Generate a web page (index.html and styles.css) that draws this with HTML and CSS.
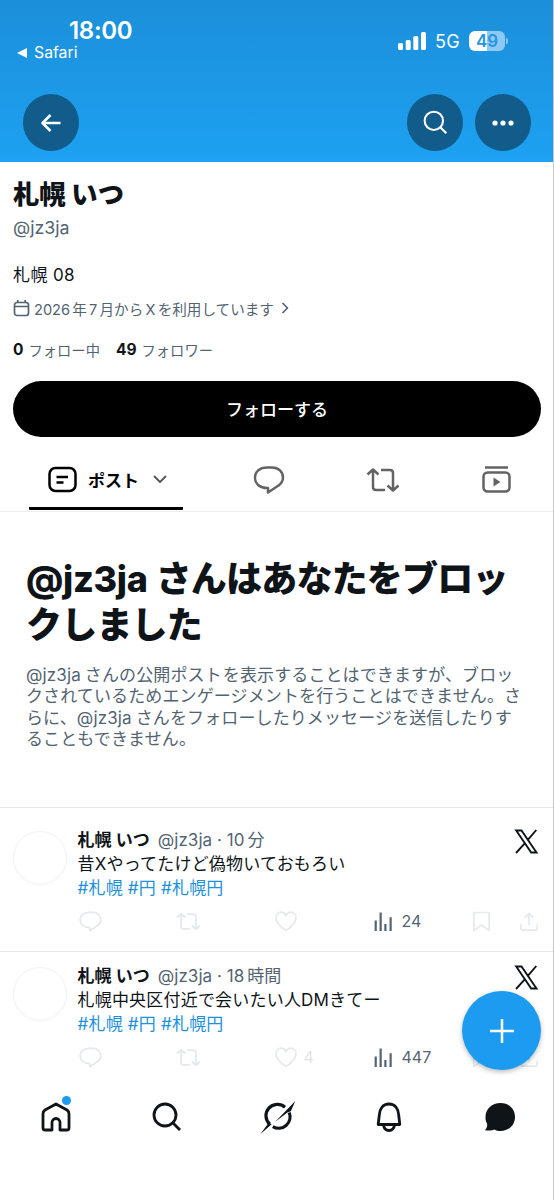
FILE: index.html
```
<!DOCTYPE html>
<html lang="ja">
<head>
<meta charset="utf-8">
<title>札幌 いつ (@jz3ja)</title>
<link rel="stylesheet" href="styles.css">
</head>
<body>
<svg class="defs" width="0" height="0" aria-hidden="true">
  <symbol id="reply" viewBox="0 0 34 34"><path d="M15 4.500h5c6.500 0 11 4.300 11 10 0 4.300-2.500 7-6 9L16 29.500V25h-1C8 25 3 21 3 14.700S8 4.500 15 4.500z"/></symbol>
  <symbol id="repost" viewBox="0 0 34 34"><path d="M1.500 11.500 7 6.500l5.500 5M7 7.500V24c0 2 1 3 3 3h9M32.500 22.500 27 27.500l-5.500-5M27 26.500V10c0-2-1-3-3-3h-9"/></symbol>
  <symbol id="heart" viewBox="0 0 24 24"><path d="M12 21.500C5 17 2 13 2 8.800 2 5.500 4.200 3.200 7 3.200c2.300 0 4 1.300 5 3.300 1-2 2.700-3.300 5-3.300 2.800 0 5 2.300 5 5.600 0 4.200-3 8.200-10 12.700z"/></symbol>
  <symbol id="views" viewBox="0 0 20 20"><path d="M1.800 9v11M7 .500V20M12 12.500V20M17.500 5.500V20"/></symbol>
  <symbol id="bookmark" viewBox="0 0 20 22"><path d="M2 1.500h16v19l-8-6-8 6z"/></symbol>
  <symbol id="share" viewBox="0 0 20 22"><path d="M10 15V3M5.500 7 10 2.500 14.500 7M1.500 14v4c0 1.500.500 2 2 2h13c1.500 0 2-.500 2-2v-4"/></symbol>
  <symbol id="search" viewBox="0 0 30 30"><circle cx="13" cy="13" r="11"/><path d="m21 21 7 7"/></symbol>
  <symbol id="xlogo" viewBox="0 0 25 25"><path d="M2.200 1.500h5.300l15 22h-5.300zM22.300 1 13.600 11.200M11.200 13.800 2 24"/></symbol>
</svg>
<div class="screen">
  <header class="cover">
    <div class="status">
      <div class="clock"><b>18:00</b><span><svg width="11" height="10"><path d="M10 0v10L0 5z"/></svg><i>Safari</i></span></div>
      <div class="signal">
        <svg width="28" height="18"><rect y="11" width="5" height="7" rx="1.500"/><rect x="7.700" y="8" width="5" height="10" rx="1.500"/><rect x="15.300" y="4" width="5" height="14" rx="1.500"/><rect x="23" width="5" height="18" rx="1.500"/></svg>
        <span class="net">5G</span>
        <span class="battery">49</span><span class="tip"></span>
      </div>
    </div>
    <div class="actions">
      <button class="round"><svg width="20" height="18" class="line"><path d="M19.500 9H1.500M9.500 1 1.500 9l8 8"/></svg></button>
      <span class="grow"></span>
      <button class="round"><svg width="25" height="25" class="line"><use href="#search"/></svg></button>
      <button class="round"><svg width="22" height="6" class="dots"><circle cx="3" cy="3" r="2.600"/><circle cx="11" cy="3" r="2.600"/><circle cx="19" cy="3" r="2.600"/></svg></button>
    </div>
  </header>
  <section class="profile">
    <h1>札幌 いつ</h1>
    <p class="handle">@jz3ja</p>
    <p class="bio">札幌 08</p>
    <p class="joined"><svg width="17" height="17" class="line"><rect x="1.500" y="2.500" width="14" height="13" rx="2.500"/><path d="M1.500 6.500h14M4.800 0v3M12.200 0v3"/></svg><span>2026<em></em>年<em></em>7<em></em>月から<em></em>X<em></em>を利用しています</span><svg width="8" height="12" class="line chev"><path d="m1.500 1 5 5-5 5"/></svg></p>
    <p class="counts"><b>0</b><span class="l1">フォロー中</span><b>49</b><span class="l2">フォロワー</span></p>
    <button class="follow">フォローする</button>
  </section>
  <nav class="tabs">
    <div class="tab active"><svg width="29" height="27" class="line"><rect x="1.500" y="2" width="26" height="23" rx="6"/><path d="M8.500 11h11.500M8.500 16.500h7"/></svg><span>ポスト</span><svg width="14" height="9" class="line down"><path d="m1 1 6 6 6-6"/></svg></div>
    <div class="tab"><svg width="34" height="34" class="line"><use href="#reply"/></svg></div>
    <div class="tab"><svg width="34" height="34" class="line"><use href="#repost"/></svg></div>
    <div class="tab"><svg width="29" height="27" class="line"><rect x="1.500" y="6.500" width="26" height="19" rx="4"/><path d="M3 1.500h23"/><path class="solid" d="m11.500 11.500 7 4.500-7 4.500z"/></svg></div>
  </nav>
  <section class="blocked">
    <h2><span class="latin">@jz3ja</span>さんはあなたをブロッ<br>クしました</h2>
    <p><span>@jz3ja</span><em class="wide"></em>さんの公開ポスト<em class="thin"></em>を表示することはできますが、ブロッ<br>クされているためエンゲージメントを行うことはできません。さ<br>らに、<span>@jz3ja</span><em class="wide"></em>さんをフォローしたりメッセージを送信したりす<br>ることもできません。</p>
  </section>
  <article class="post first">
    <div class="avatar"></div>
    <div class="body">
      <div class="meta"><b>札幌 いつ</b><span>@jz3ja · 10<em></em>分</span></div>
      <p>昔Xやってたけど偽物いておもろい</p>
      <p class="tags">#札幌 #円 #札幌円</p>
      <div class="tools"><svg class="c"><use href="#reply"/></svg><svg class="r"><use href="#repost"/></svg><svg class="h"><use href="#heart"/></svg><span class="likes"></span><svg class="v"><use href="#views"/></svg><span class="num">24</span><svg class="b"><use href="#bookmark"/></svg><svg class="s"><use href="#share"/></svg></div>
    </div>
    <svg class="x"><use href="#xlogo"/></svg>
  </article>
  <article class="post second">
    <div class="avatar"></div>
    <div class="body">
      <div class="meta"><b>札幌 いつ</b><span>@jz3ja · 18<em></em>時間</span></div>
      <p>札幌中央区付近で会いたい人DMきてー</p>
      <p class="tags">#札幌 #円 #札幌円</p>
      <div class="tools"><svg class="c"><use href="#reply"/></svg><svg class="r"><use href="#repost"/></svg><svg class="h"><use href="#heart"/></svg><span class="likes">4</span><svg class="v"><use href="#views"/></svg><span class="num">447</span><svg class="b"><use href="#bookmark"/></svg><svg class="s"><use href="#share"/></svg></div>
    </div>
    <svg class="x"><use href="#xlogo"/></svg>
  </article>
  <nav class="bottom">
    <a class="home"><svg width="30" height="30" class="line"><path d="M15 2 4 8c-1.500 1-2 2-2 4v14c0 1.500.500 2 2 2h7v-7.500a4 4 0 0 1 8 0V28h7c1.500 0 2-.500 2-2V12c0-2-.500-3-2-4z"/></svg><i class="badge"></i></a>
    <a><svg width="30" height="30" class="line"><use href="#search"/></svg></a>
    <a><svg width="36" height="34" viewBox="0 0 36 34"><path class="ring" d="M9.800 23.300A11.400 11.400 0 0 1 25 6.200M29.200 11.500A11.400 11.400 0 0 1 12.800 25.600"/><path d="M35.300 0 15.300 20.700 27.800 11.200l3-1zM.300 33.300 11.600 23.200 8.500 22z"/></svg></a>
    <a><svg width="28" height="30" class="line"><path d="M4.300 13C4.700 6.500 8 2 14 2s9.300 4.500 9.700 11l1.100 9.500H3.200z"/><path d="M8.500 23c.500 3.500 2.500 5.500 5.500 5.500s5-2 5.500-5.500"/></svg></a>
    <a><svg width="32" height="30"><path d="M16.500 1C25 1 31 7 31 15s-6 14-14.500 14c-2.500 0-4-.500-6-1.500-2.500 1-6 1.500-9.500.700C3 26 3.500 24 3 21.500 1.700 19.500 1.500 17.500 1.500 15 1.500 7 8 1 16.500 1z"/></svg></a>
  </nav>
  <button class="fab"><svg width="24" height="24" class="line"><path d="M12 0v24M0 12h24"/></svg></button>
</div>
</body>
</html>
```
FILE: styles.css
```
* { box-sizing: border-box; }
body, h1, h2, p { margin: 0; }
body { background: #fff; color: #0f1419; font-family: Inter, "Noto Sans CJK JP", sans-serif; }
button { border: 0; padding: 0; font: inherit; color: inherit; }
i { font-style: normal; }
em { display: inline-block; width: 3px; }
em.thin { width: 1px; }
em.wide { width: 4px; }
svg { display: block; flex: none; fill: #0f1419; }
.defs { position: absolute; }
.line, .tools svg { fill: none; stroke: currentColor; stroke-width: 2.500; stroke-linejoin: round; }
.screen { position: relative; width: 554px; height: 1200px; overflow: hidden; border-right: 1px solid #c5c7c9; display: flex; flex-direction: column; }

.cover { height: 162px; margin-right: -1px; flex: none; color: #fff; background: linear-gradient(#1c8fd9, #1da1f2); padding: 17px 23px 0 17px; }
.status { height: 77px; display: flex; justify-content: space-between; }
.clock b { display: block; margin-left: 52px; font-size: 24px; line-height: 28px; font-weight: 600; letter-spacing: -.3px; }
.clock span { display: flex; align-items: center; gap: 6px; font-size: 15.800px; line-height: 15px; }
.clock svg, .signal svg, .dots { fill: #fff; }
.signal { display: flex; align-items: center; height: 22px; margin: 13px 23px 0 0; }
.signal .net { font-size: 18px; margin: 0 9px; letter-spacing: .3px; }
.battery { width: 36px; height: 20px; border-radius: 6px; background: linear-gradient(90deg, #fff 50%, #8fc9f2 50%); color: #2296e3; font-size: 17px; line-height: 20px; font-weight: 600; text-align: center; }
.tip { width: 2px; height: 6px; background: #8fc9f2; border-radius: 0 3px 3px 0; margin-left: 1px; }
.actions { display: flex; gap: 12px; padding-left: 6px; }
.grow { flex: 1; }
.round { width: 56px; height: 57px; border-radius: 50%; background: #115c8b; display: grid; place-items: center; color: #fff; }

.profile { height: 275px; padding: 16px 12px 0 13px; }
.profile h1 { font-size: 26.300px; line-height: 34px; font-weight: 800; height: 37px; }
.handle { font-size: 17.800px; line-height: 25px; color: #536471; height: 48px; }
.bio { font-size: 17px; line-height: 24px; height: 33px; letter-spacing: .4px; }
.joined { display: flex; align-items: center; height: 24px; font-size: 14.600px; color: #536471; }
.joined em { width: 2.200px; }
.joined span { margin: 0 7px 0 4px; white-space: nowrap; }
.joined .line { stroke-width: 1.700; }
.counts { display: flex; height: 48px; align-items: center; font-size: 14.300px; color: #536471; margin-top: 6px; padding-bottom: 2px; }
.counts b { color: #0f1419; font-weight: 700; margin-right: 5px; font-size: 15.500px; }
.l1 { margin-right: 16px; }
.follow { width: 528px; height: 56px; border-radius: 28px; background: #000; color: #fff; font-size: 17px; font-weight: 500; margin-top: 7px; padding-bottom: 1px; }

.tabs { height: 75px; border-bottom: 1px solid #eceeef; display: grid; grid-template-columns: 212px 114px 114px 114px; color: #636363; flex: none; }
.tab { display: flex; align-items: center; justify-content: center; height: 73px; padding-top: 13px; }
.tab:last-child { padding: 12px 2px 0 0; }
.tab.active { color: #000; border-bottom: 3px solid #000; margin: 0 29px; justify-content: flex-start; padding: 15px 0 0 19px; border-radius: 1px; }
.tab.active span { font-size: 17px; font-weight: 700; margin: 0 14px 0 11px; }
.down { stroke-width: 1.800; color: #555; }
.solid { fill: currentColor; stroke: none; }

.blocked { height: 295px; padding: 44px 0 0 26px; white-space: nowrap; flex: none; }
.blocked h2 { font-size: 36px; line-height: 46px; font-weight: 800; letter-spacing: -.800px; }
.latin { margin-right: 8px; letter-spacing: -.300px; }
.blocked p { margin-top: 17px; font-size: 17px; line-height: 21.300px; color: #536471; letter-spacing: .12px; }

.post { height: 144px; border-top: 1px solid #e4e8ea; display: flex; padding: 20px 14px 0 13px; flex: none; }
.second { padding-top: 12px; height: 121px; }
.avatar { width: 54px; height: 54px; border-radius: 50%; border: 1px solid #f0f1f2; margin-top: 3px; flex: none; }
.body { width: 436px; margin-left: 10.500px; white-space: nowrap; flex: none; }
.meta, .post p { font-size: 17px; line-height: 24px; height: 24px; letter-spacing: .2px; }
.post .meta { display: flex; color: #536471; gap: 8px; letter-spacing: .05px; }
.meta b { color: #0f1419; font-weight: 700; }
.post .tags { color: #1d91dc; }
.post .x { width: 25px; height: 25px; margin: 1px 0 0 auto; fill: none; stroke: #0f1419; stroke-width: 1.900; }
.tools { display: flex; align-items: center; height: 24px; margin-top: 9px; color: #536471; font-size: 16px; width: 464px; }
.tools svg { color: #e3e9ed; stroke-width: 1.700; width: 24px; height: 24px; }
.tools .c, .tools .r { width: 25px; height: 25px; stroke-width: 2.500; }
.tools .r { margin-left: 73px; }
.tools .h { margin-left: 73px; }
.likes { width: 76px; padding-left: 6px; color: #e0e4e7; }
.tools .v { width: 19px; height: 19px; color: #536471; stroke-width: 2.300; }
.num { width: 71px; padding-left: 9px; }
.tools .b { width: 19px; height: 21px; margin-left: 8px; }
.tools .s { width: 20px; height: 21px; margin-left: 28px; }

.bottom { flex: 1; background: #fff; display: grid; grid-template-columns: repeat(5, 111px); padding-top: 29px; align-items: start; }
.bottom a { height: 32px; display: grid; place-items: center; position: relative; }
.bottom .line { stroke-width: 2.800; }
.ring { fill: none; stroke: #0f1419; stroke-width: 3.200; }
.badge { position: absolute; left: 62px; top: -5px; width: 9px; height: 9px; border-radius: 50%; background: #1d9bf0; }
.fab { position: absolute; right: 12px; top: 991px; width: 79px; height: 79px; border-radius: 50%; background: #1d9bf0; color: #fff; display: grid; place-items: center; box-shadow: 0 2px 5px #0004; }
```
